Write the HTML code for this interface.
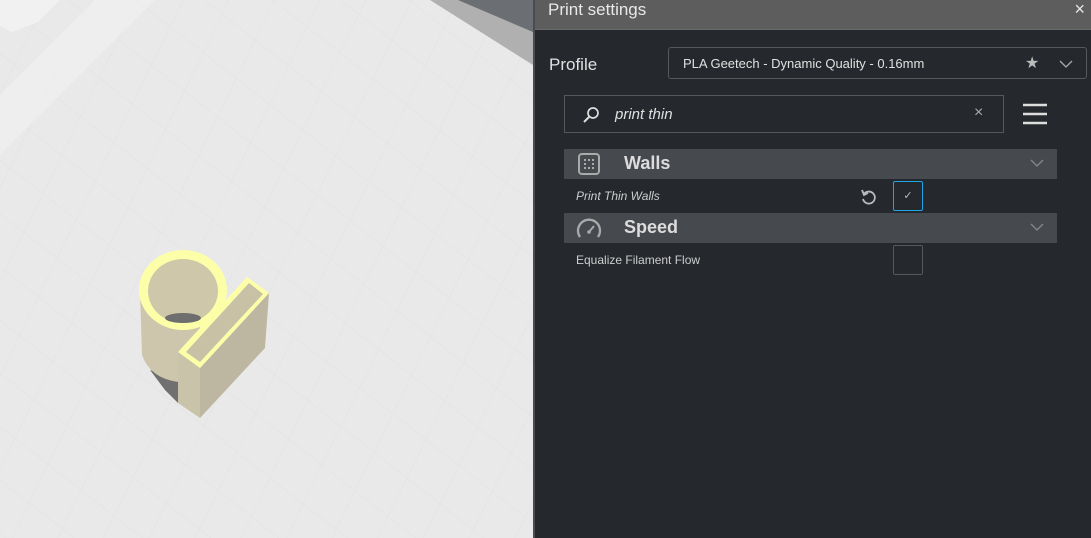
<!DOCTYPE html><html><head><style>
body{margin:0;width:1091px;height:538px;overflow:hidden;position:relative;font-family:"Liberation Sans",sans-serif;background:#e6e6e6}
.p{position:absolute;left:533px;top:0;width:558px;height:538px;background:#25292d;border-left:2px solid #4a4d50;box-sizing:border-box}
.t{position:absolute;left:0;top:0;width:100%;height:30px;background:#5d5d5d;border-bottom:1px solid #6a6a6a;color:#e8e8e8;font-size:17px;line-height:19px;padding-left:13px;box-sizing:border-box}
.a{position:absolute;color:#e0e0e0}
.hd{position:absolute;left:29px;width:493px;height:30px;background:#464a4e}
.hd span{position:absolute;left:60px;top:4px;font-size:18px;font-weight:bold;color:#dcdcdc}
.cv{position:absolute;left:466px;top:9px}
</style></head><body>
<svg width="533" height="538" style="position:absolute;left:0;top:0">
<defs><pattern id="g" width="42" height="42" patternUnits="userSpaceOnUse" patternTransform="rotate(38) skewX(12)"><path d="M0 0H42M0 0V42" stroke="#dcdcdc" stroke-width="1" fill="none"/></pattern></defs>
<rect width="533" height="538" fill="#e9e9e9"/>
<rect width="533" height="538" fill="url(#g)" opacity=".6"/>
<polygon points="0,0 60,0 38,22 12,32 0,26" fill="#f1f1f1"/>
<polygon points="95,0 155,0 0,155 0,95" fill="#f0f0f0" opacity=".7"/>
<polygon points="430,0 533,0 533,65" fill="#b0b0b0"/>
<polygon points="458,0 533,0 533,32" fill="#6b6e72"/>
<polygon points="150,370 178,380 178,403 165,390" fill="#707070"/>
<path d="M140 291 L142 355 Q150 378 178 382 L200 380 L200 300 Z" fill="#cdc6ac"/>
<polygon points="178,352 200,368 200,418 178,403" fill="#c9c3aa"/>
<polygon points="200,368 269,293 265,348 200,418" fill="#bdb7a1"/>
<ellipse cx="183" cy="290" rx="44" ry="40" fill="#fdffa8"/>
<ellipse cx="183" cy="291" rx="35" ry="32" fill="#cfc7aa"/>
<ellipse cx="183" cy="318" rx="18" ry="5" fill="#6e6e6e"/>
<polygon points="178,352 247,277 269,293 200,368" fill="#fdffa8"/>
<polygon points="186,352 249,283 263,294 200,362" fill="#c8c1a6"/>
</svg>
<div class="p">
<div class="t">Print settings<span style="position:absolute;right:6px;top:0;font-size:18px">×</span></div>
<div class="a" style="left:14px;top:55px;font-size:17px">Profile</div>
<div style="position:absolute;left:133px;top:47px;width:419px;height:32px;border:1px solid #55585c;border-radius:3px;box-sizing:border-box">
<span class="a" style="left:14px;top:8px;font-size:13px">PLA Geetech - Dynamic Quality - 0.16mm</span>
<span class="a" style="left:356px;top:5px;font-size:16px;color:#bbb">★</span>
<svg class="a" width="14" height="10" style="left:390px;top:11px"><path d="M1 2L7 8L13 2" stroke="#aaa" stroke-width="1.3" fill="none"/></svg></div>
<div style="position:absolute;left:29px;top:95px;width:440px;height:38px;border:1px solid #55585c;box-sizing:border-box">
<svg width="20" height="20" style="position:absolute;left:16px;top:9px"><circle cx="12" cy="8" r="5" stroke="#ddd" stroke-width="1.7" fill="none"/><line x1="8" y1="12" x2="3" y2="17" stroke="#ddd" stroke-width="2"/></svg>
<span class="a" style="left:50px;top:10px;font-size:15px;font-style:italic">print thin</span>
<span class="a" style="left:409px;top:8px;font-size:16px;color:#aaa">×</span></div>
<svg width="26" height="22" style="position:absolute;left:488px;top:103px"><path d="M0 2H24M0 11H24M0 20H24" stroke="#ddd" stroke-width="2.5"/></svg>
<div class="hd" style="top:149px"><svg width="22" height="22" style="position:absolute;left:14px;top:4px"><rect x="1" y="1" width="20" height="20" rx="3" stroke="#aaa" stroke-width="2" fill="none"/><g fill="#aaa"><rect x="6" y="6" width="2" height="2"/><rect x="10" y="6" width="2" height="2"/><rect x="14" y="6" width="2" height="2"/><rect x="6" y="10" width="2" height="2"/><rect x="14" y="10" width="2" height="2"/><rect x="6" y="14" width="2" height="2"/><rect x="10" y="14" width="2" height="2"/><rect x="14" y="14" width="2" height="2"/></g></svg><span>Walls</span><svg class="cv" width="14" height="10"><path d="M1 2L7 8L13 2" stroke="#888" stroke-width="1.3" fill="none"/></svg></div>
<div class="a" style="left:41px;top:189px;font-size:12px;font-style:italic;color:#ccc">Print Thin Walls</div>
<svg width="18" height="18" style="position:absolute;left:325px;top:188px"><path d="M4 6 A6 6 0 1 1 3 11" stroke="#bbb" stroke-width="1.8" fill="none"/><path d="M2 2 L4 7 L8 5" stroke="#bbb" stroke-width="1.8" fill="none"/></svg>
<div style="position:absolute;left:358px;top:181px;width:30px;height:30px;border:1px solid #1ea4e8;box-sizing:border-box;border-radius:2px;color:#bbb;font-size:11px;text-align:center;line-height:28px">✓</div>
<div class="hd" style="top:213px"><svg width="26" height="22" style="position:absolute;left:12px;top:4px"><path d="M4 20 A11 11 0 1 1 22 20" stroke="#aaa" stroke-width="2.3" fill="none"/><line x1="13" y1="15" x2="18" y2="9" stroke="#aaa" stroke-width="2"/><circle cx="13" cy="15" r="1.8" fill="#aaa"/></svg><span>Speed</span><svg class="cv" width="14" height="10"><path d="M1 2L7 8L13 2" stroke="#888" stroke-width="1.3" fill="none"/></svg></div>
<div class="a" style="left:41px;top:253px;font-size:12px;color:#ccc">Equalize Filament Flow</div>
<div style="position:absolute;left:358px;top:245px;width:30px;height:30px;border:1px solid #55585c;box-sizing:border-box;border-radius:2px"></div>
</div>
</body></html>
